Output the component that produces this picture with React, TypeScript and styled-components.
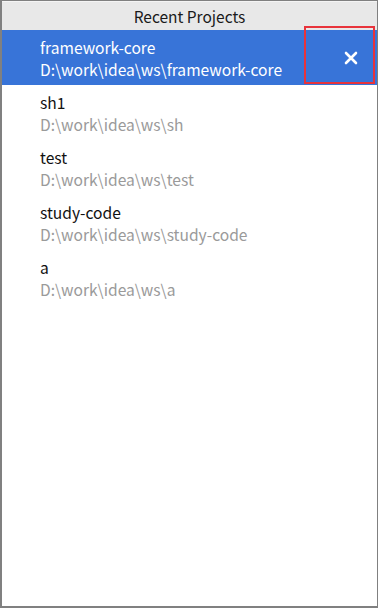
import styled, {createGlobalStyle} from 'styled-components';

const GlobalStyle = createGlobalStyle`
    html, body {
        margin: 0;
        padding: 0;
        background: #ffffff;
    }
    body {
        font-family: "Noto Sans CJK SC", "Noto Sans", sans-serif;
    }
`;

const Panel = styled.div`
    position: relative;
    box-sizing: border-box;
    width: 378px;
    height: 608px;
    border: 1px solid #808080;
    border-left-width: 2px;
    border-bottom-width: 2px;
    background: #ffffff;
    display: flex;
    flex-direction: column;
`;

const Header = styled.div`
    height: 28px;
    background: #e8e8e8;
    border-top: 1px solid #f4f4f4;
    display: flex;
    align-items: center;
    justify-content: center;
    font-size: 15.5px;
    color: #1a1a1a;
`;

const List = styled.div`
    display: flex;
    flex-direction: column;
`;

const Row = styled.div<{selected?: boolean}>`
    height: 55px;
    box-sizing: border-box;
    padding: 6px 0 0 38px;
    display: flex;
    align-items: flex-start;
    background: ${p => (p.selected ? '#3874d8' : 'transparent')};
`;

const Texts = styled.div`
    flex: 1;
    display: flex;
    flex-direction: column;
`;

const Name = styled.div<{selected?: boolean}>`
    font-size: 15.6px;
    line-height: 22px;
    color: ${p => (p.selected ? '#ffffff' : '#111111')};
`;

const Path = styled.div<{selected?: boolean}>`
    font-size: 15.6px;
    line-height: 22px;
    color: ${p => (p.selected ? '#ffffff' : '#9a9a9a')};
`;

const CloseButton = styled.div`
    width: 52px;
    align-self: stretch;
    margin-top: -6px;
    display: flex;
    align-items: center;
    justify-content: center;
`;

const Highlight = styled.div`
    position: absolute;
    left: 302px;
    top: 25px;
    width: 71px;
    height: 58px;
    box-sizing: border-box;
    border: 2px solid #e8333b;
    pointer-events: none;
`;

const projects = [
    {name: 'framework-core', path: 'D:\\work\\idea\\ws\\framework-core'},
    {name: 'sh1', path: 'D:\\work\\idea\\ws\\sh'},
    {name: 'test', path: 'D:\\work\\idea\\ws\\test'},
    {name: 'study-code', path: 'D:\\work\\idea\\ws\\study-code'},
    {name: 'a', path: 'D:\\work\\idea\\ws\\a'},
];

const App: React.FC = () => {
    return <>
        <GlobalStyle />
        <Panel>
            <Header>Recent Projects</Header>
            <List>
                {projects.map((p, i) => (
                    <Row key={p.name} selected={i === 0}>
                        <Texts>
                            <Name selected={i === 0}>{p.name}</Name>
                            <Path selected={i === 0}>{p.path}</Path>
                        </Texts>
                        {i === 0 && (
                            <CloseButton>
                                <svg width="14" height="14" viewBox="0 0 14 14">
                                    <path d="M2 2 L12 12 M12 2 L2 12" stroke="#ffffff" strokeWidth="2.6" strokeLinecap="round" />
                                </svg>
                            </CloseButton>
                        )}
                    </Row>
                ))}
            </List>
            <Highlight />
        </Panel>
    </>;
};

export default App;
